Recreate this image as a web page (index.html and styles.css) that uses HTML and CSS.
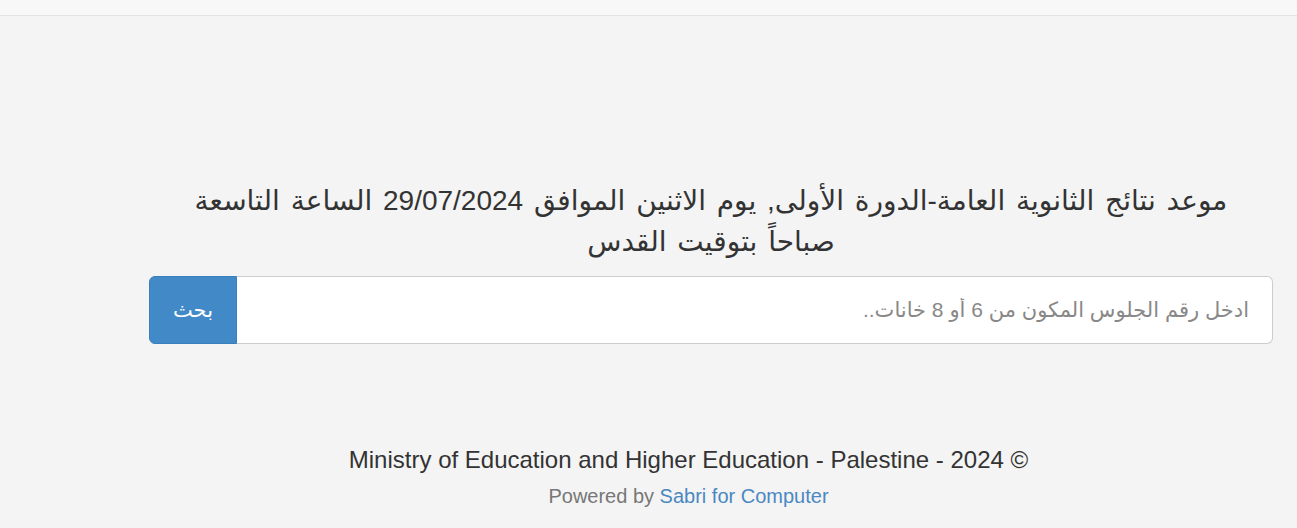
FILE: index.html
```html
<!DOCTYPE html>
<html lang="ar" dir="rtl">
<head>
<meta charset="utf-8">
<title>نتائج الثانوية العامة</title>
<link rel="stylesheet" href="styles.css">
</head>
<body>
<nav class="navbar"></nav>
<main class="container">
  <h2 class="notice">موعد نتائج الثانوية العامة-الدورة الأولى, يوم الاثنين الموافق 29/07/2024 الساعة التاسعة صباحاً بتوقيت القدس</h2>
  <form class="search">
    <input class="search-input" type="text" placeholder="ادخل رقم الجلوس المكون من 6 أو 8 خانات..">
    <button class="search-btn" type="button">بحث</button>
  </form>
</main>
<footer class="footer" dir="ltr">
  <p class="copy">Ministry of Education and Higher Education - Palestine - 2024 ©</p>
  <p class="powered">Powered by <a href="#">Sabri for Computer</a></p>
</footer>
</body>
</html>
```
FILE: styles.css
```css
* { box-sizing: border-box; }
html, body { margin: 0; padding: 0; }
body {
  background: #f4f4f4;
  font-family: "Liberation Sans", Arial, "DejaVu Sans", sans-serif;
  color: #333;
  height: 528px;
  overflow: hidden;
}
.navbar {
  height: 16px;
  background: #f8f8f8;
  border-bottom: 1px solid #e3e3e3;
}
.container {
  width: 1124px;
  margin: 0 24px 0 149px;
  padding-top: 164px;
}
.notice {
  margin: 0 0 14px;
  padding: 0 30px;
  font-size: 28px;
  line-height: 41px;
  font-weight: normal;
  word-spacing: 3px;
  text-align: center;
  color: #333;
}
.search {
  display: flex;
  height: 68px;
  margin: 0;
}
.search-input {
  flex: 1;
  height: 68px;
  border: 1px solid #ccc;
  border-left: 0;
  border-radius: 0 6px 6px 0;
  background: #fff;
  padding: 0 23px;
  font-family: inherit;
  font-size: 21px;
  color: #555;
  outline: none;
}
.search-input::placeholder { color: #888; }
.search-btn {
  width: 88px;
  height: 68px;
  border: 1px solid #3a7fbd;
  border-radius: 6px 0 0 6px;
  background: #4189c7;
  color: #fff;
  font-family: inherit;
  font-size: 21px;
  padding: 0;
}
.footer {
  text-align: center;
  padding: 100px 0 0 80px;
}
.copy {
  margin: 0;
  font-size: 24px;
  line-height: 32px;
  color: #333;
}
.powered {
  margin: 6px 0 0;
  font-size: 20px;
  line-height: 28px;
  color: #777;
}
.powered a { color: #4a88c2; text-decoration: none; }
```
